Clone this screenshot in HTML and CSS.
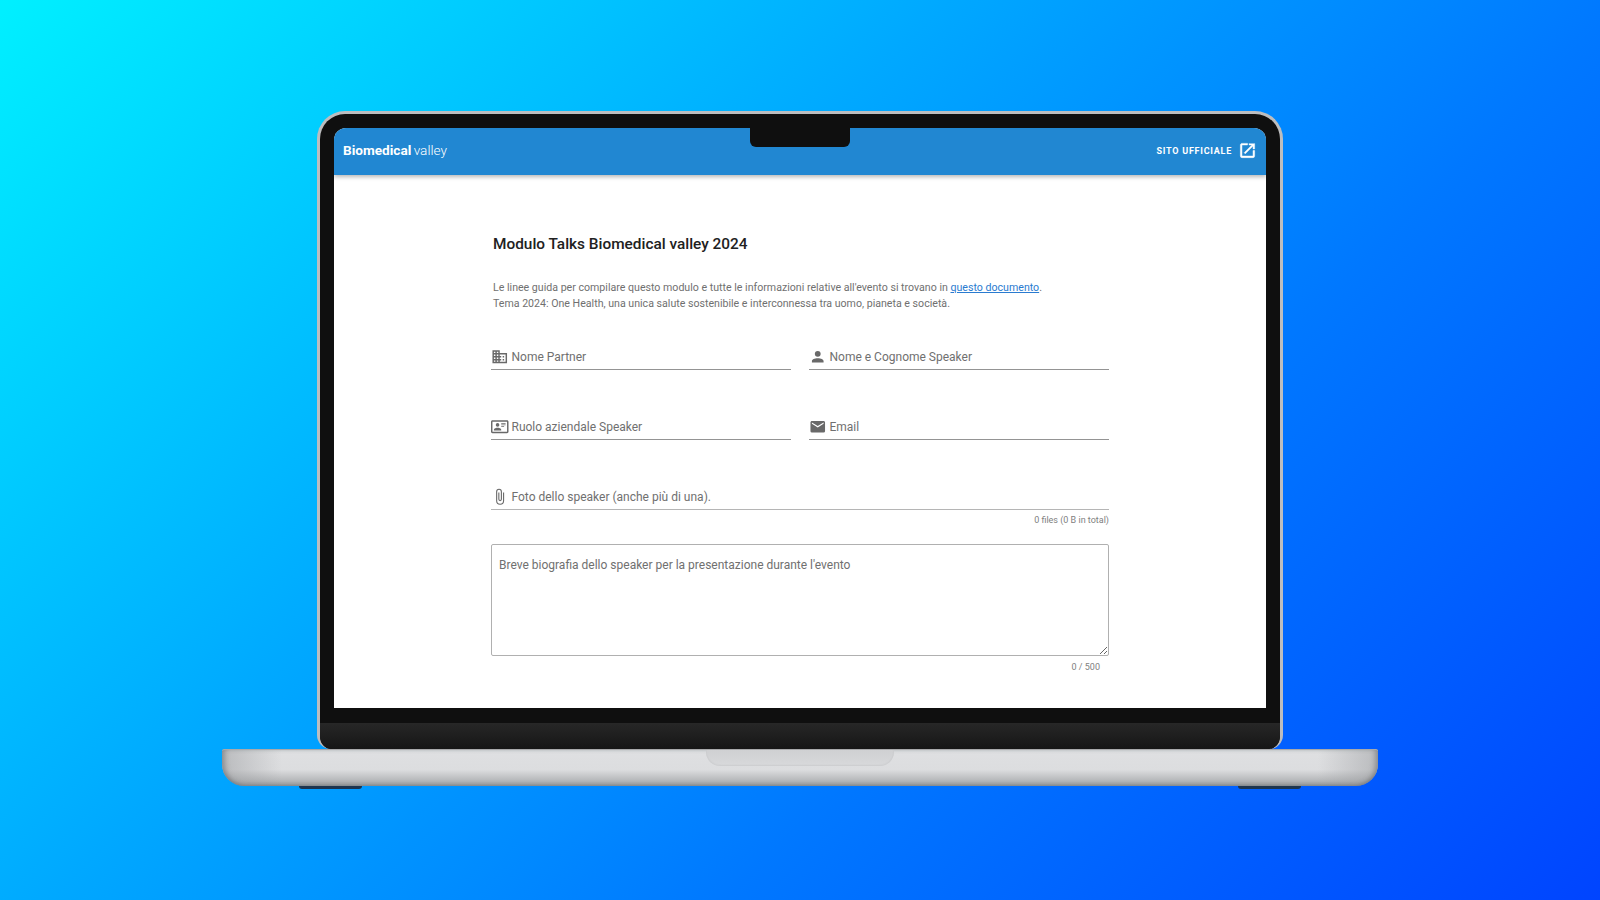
FILE: index.html
```html
<!DOCTYPE html>
<html lang="it">
<head>
<meta charset="utf-8">
<title>Modulo Talks Biomedical valley 2024</title>
<link rel="stylesheet" href="styles.css">
</head>
<body>
<div class="stage">
  <div class="lid">
    <div class="screen">
      <div class="notch"></div>
      <header class="appbar">
        <div class="logo"><b>Biomedical</b> <span>valley</span></div>
        <a class="site-link">SITO UFFICIALE
          <svg class="ext-icon" viewBox="0 0 24 24"><path d="M14,3V5H17.59L7.76,14.83L9.17,16.24L19,6.41V10H21V3M19,19H5V5H12V3H5C3.89,3 3,3.9 3,5V19A2,2 0 0,0 5,21H19A2,2 0 0,0 21,19V12H19V19Z"/></svg>
        </a>
      </header>
      <main class="content">
        <div class="form">
          <h1 class="title">Modulo Talks Biomedical valley 2024</h1>
          <p class="intro">Le linee guida per compilare questo modulo e tutte le informazioni relative all'evento si trovano in <a class="doc-link">questo documento</a>.<br>Tema 2024: One Health, una unica salute sostenibile e interconnessa tra uomo, pianeta e società.</p>
          <div class="grid">
            <div class="field">
              <svg class="icon" viewBox="0 0 24 24"><path d="M18,15H16V17H18M18,11H16V13H18M20,19H12V17H14V15H12V13H14V11H12V9H20M10,7H8V5H10M10,11H8V9H10M10,15H8V13H10M10,19H8V17H10M6,7H4V5H6M6,11H4V9H6M6,15H4V13H6M6,19H4V17H6M12,7V3H2V21H22V7H12Z"/></svg>
              <span>Nome Partner</span>
            </div>
            <div class="field">
              <svg class="icon" viewBox="0 0 24 24"><path d="M12,4A4,4 0 0,1 16,8A4,4 0 0,1 12,12A4,4 0 0,1 8,8A4,4 0 0,1 12,4M12,14C16.42,14 20,15.79 20,18V20H4V18C4,15.79 7.58,14 12,14Z"/></svg>
              <span>Nome e Cognome Speaker</span>
            </div>
            <div class="field">
              <svg class="icon" viewBox="0 0 24 24"><path d="M22,3H2C0.9,3 0,3.9 0,5V19C0,20.1 0.9,21 2,21H22C23.1,21 24,20.1 24,19V5C24,3.9 23.1,3 22,3M22,19H2V5H22V19M14,17V15.75C14,14.09 10.66,13.25 9,13.25C7.34,13.25 4,14.09 4,15.75V17H14M9,7A2.5,2.5 0 0,0 6.5,9.5A2.5,2.5 0 0,0 9,12A2.5,2.5 0 0,0 11.5,9.5A2.5,2.5 0 0,0 9,7M14,7V8H20V7H14M14,9V10H20V9H14M14,11V12H18V11H14"/></svg>
              <span>Ruolo aziendale Speaker</span>
            </div>
            <div class="field">
              <svg class="icon" viewBox="0 0 24 24"><path d="M20,8L12,13L4,8V6L12,11L20,6M20,4H4C2.89,4 2,4.89 2,6V18A2,2 0 0,0 4,20H20A2,2 0 0,0 22,18V6C22,4.89 21.1,4 20,4Z"/></svg>
              <span>Email</span>
            </div>
            <div class="field field-wide">
              <svg class="icon" viewBox="0 0 24 24"><path d="M16.5,6V17.5A4,4 0 0,1 12.5,21.5A4,4 0 0,1 8.5,17.5V5A2.5,2.5 0 0,1 11,2.5A2.5,2.5 0 0,1 13.5,5V15.5A1,1 0 0,1 12.5,16.5A1,1 0 0,1 11.5,15.5V6H10V15.5A2.5,2.5 0 0,0 12.5,18A2.5,2.5 0 0,0 15,15.5V5A4,4 0 0,0 11,1A4,4 0 0,0 7,5V17.5A5.5,5.5 0 0,0 12.5,23A5.5,5.5 0 0,0 18,17.5V6H16.5Z"/></svg>
              <span>Foto dello speaker (anche più di una).</span>
            </div>
          </div>
          <div class="hint">0 files (0 B in total)</div>
          <div class="textarea">Breve biografia dello speaker per la presentazione durante l'evento</div>
          <div class="counter">0 / 500</div>
        </div>
      </main>
    </div>
    <div class="chin"></div>
  </div>
  <div class="base"><div class="thumb"></div></div>
  <div class="feet"><div class="foot"></div><div class="foot"></div></div>
</div>
</body>
</html>
```

FILE: styles.css
```css
* { box-sizing: border-box; }
html, body { margin: 0; height: 100%; }
body {
  font-family: Roboto, "Liberation Sans", sans-serif;
  background: linear-gradient(135deg, #00f0ff 0%, #00a8ff 38%, #0078ff 65%, #0044ff 100%);
  overflow: hidden;
}
.stage {
  height: 900px;
  padding-top: 111px;
  display: flex;
  flex-direction: column;
  align-items: center;
}
.lid {
  width: 966px;
  height: 638px;
  padding: 14px 14px 0;
  background: #0f0f0f;
  border: 3px solid #bcbdbf;
  border-bottom: 0;
  border-radius: 28px 28px 14px 14px;
  display: flex;
  flex-direction: column;
}
.screen {
  position: relative;
  height: 580px;
  flex: none;
  background: #fff;
  border-radius: 12px 12px 0 0;
  overflow: hidden;
}
.notch {
  position: absolute;
  top: 0;
  left: 416px;
  width: 100px;
  height: 19px;
  background: #0f0f0f;
  border-radius: 0 0 6px 6px;
  z-index: 2;
}
.appbar {
  height: 47px;
  background: #2187d2;
  color: #fff;
  display: flex;
  align-items: center;
  justify-content: space-between;
  padding: 0 9px 2px;
  box-shadow: 0 2px 4px rgba(0, 0, 0, .28);
  position: relative;
}
.logo { font-size: 13.6px; padding-bottom: 2px; word-spacing: -1px; }
.logo b { font-weight: 700; }
.logo span { font-weight: 300; }
.site-link {
  display: flex;
  align-items: center;
  gap: 6px;
  font-size: 9px;
  font-weight: 700;
  letter-spacing: .75px;
}
.ext-icon { width: 19px; height: 19px; fill: #fff; stroke: #fff; stroke-width: .6; }
.content { display: flex; justify-content: center; }
.form { width: 618px; padding-top: 59px; }
.title {
  margin: 0 0 0 2px;
  font-size: 15.38px;
  line-height: 20px;
  font-weight: 500;
  color: #212121;
}
.intro {
  margin: 26px 0 0 2px;
  font-size: 10.62px;
  line-height: 16px;
  color: #707070;
}
.doc-link { color: #2a7bd0; text-decoration: underline; }
.grid {
  margin-top: 33px;
  display: grid;
  grid-template-columns: 1fr 1fr;
  column-gap: 18px;
  row-gap: 45px;
}
.field {
  height: 25px;
  display: flex;
  align-items: center;
  gap: 3px;
  border-bottom: 1px solid #949494;
  font-size: 12px;
  color: #707070;
}
.field-wide { grid-column: 1 / 3; border-bottom-color: #b5b5b5; }
.icon { width: 17.5px; height: 17.5px; fill: #696969; flex: none; }
.hint {
  margin-top: 4px;
  height: 12px;
  text-align: right;
  font-size: 9px;
  line-height: 12px;
  color: #808080;
}
.textarea {
  margin-top: 18px;
  height: 112px;
  padding: 12px 7px;
  border: 1px solid #b0b0b0;
  border-radius: 2px;
  font-size: 12px;
  line-height: 16px;
  color: #707070;
  resize: vertical;
  overflow: auto;
}
.counter {
  margin-top: 5px;
  padding-right: 9px;
  text-align: right;
  font-size: 9px;
  line-height: 12px;
  color: #808080;
}
.chin {
  margin: 15px -14px 0;
  flex: 1;
  background: linear-gradient(#272727, #161616);
  border-radius: 0 0 12px 12px;
}
.base {
  width: 1156px;
  height: 37px;
  flex: none;
  display: flex;
  justify-content: center;
  border-top: 1px solid #a9aaac;
  border-radius: 2px 2px 22px 22px;
  background:
    linear-gradient(90deg, rgba(150,152,155,.5) 0, rgba(150,152,155,0) 60px, rgba(150,152,155,0) calc(100% - 60px), rgba(150,152,155,.5) 100%),
    linear-gradient(#dfe0e2 0%, #dcdddf 55%, #a2a4a7 100%);
  box-shadow: inset 5px 0 5px -2px rgba(110,112,115,.55), inset -5px 0 5px -2px rgba(110,112,115,.55), inset 0 -3px 4px -2px rgba(90,92,95,.4);
  position: relative;
  z-index: 1;
}
.thumb {
  width: 188px;
  height: 16px;
  background: linear-gradient(#cfd0d2, #d8d9db);
  border-radius: 0 0 14px 14px;
  box-shadow: inset 0 -1px 2px rgba(0, 0, 0, .06);
}
.feet {
  width: 1002px;
  display: flex;
  justify-content: space-between;
}
.foot {
  width: 63px;
  height: 3px;
  background: #1c3550;
  border-radius: 0 0 3px 3px;
}
```
